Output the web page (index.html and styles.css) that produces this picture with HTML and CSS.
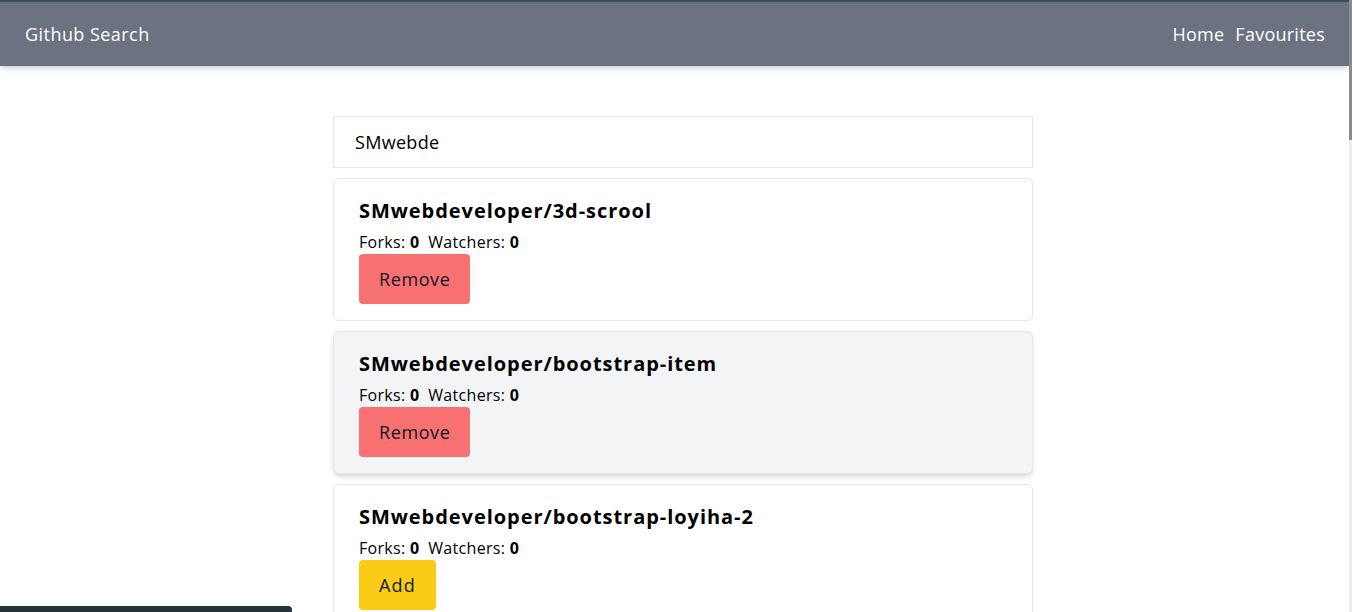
FILE: index.html
```html
<!DOCTYPE html>
<html lang="en">
<head>
<meta charset="utf-8">
<title>Github Search</title>
<link rel="stylesheet" href="styles.css">
</head>
<body>
<header class="navbar">
  <a class="brand" href="#">Github Search</a>
  <nav class="nav-links">
    <a href="#">Home</a>
    <a href="#">Favourites</a>
  </nav>
</header>
<main class="main">
  <div class="content">
    <input class="search" type="text" value="SMwebde">
    <div class="card">
      <h2 class="repo-title">SMwebdeveloper/3d-scrool</h2>
      <p class="repo-meta">Forks: <b>0</b>&nbsp; Watchers: <b>0</b></p>
      <button class="btn btn-remove">Remove</button>
    </div>
    <div class="card card-hover">
      <h2 class="repo-title">SMwebdeveloper/bootstrap-item</h2>
      <p class="repo-meta">Forks: <b>0</b>&nbsp; Watchers: <b>0</b></p>
      <button class="btn btn-remove">Remove</button>
    </div>
    <div class="card">
      <h2 class="repo-title">SMwebdeveloper/bootstrap-loyiha-2</h2>
      <p class="repo-meta">Forks: <b>0</b>&nbsp; Watchers: <b>0</b></p>
      <button class="btn btn-add">Add</button>
    </div>
  </div>
</main>
<div class="status-bar"></div>
<div class="scrollbar"><div class="scroll-thumb"></div></div>
</body>
</html>
```
FILE: styles.css
```css
* { box-sizing: border-box; }
html, body { margin: 0; padding: 0; }
body {
  font-family: "Open Sans", "Noto Sans", sans-serif;
  color: #000;
  background: #fff;
  overflow: hidden;
}
.navbar {
  display: flex;
  justify-content: space-between;
  align-items: center;
  height: 66px;
  padding: 0 25px 0 25px;
  margin-right: 2px;
  background: #6b7280;
  border-top: 2px solid #3e4c56;
  box-shadow: 0 4px 6px -1px rgba(0,0,0,0.12), 0 2px 4px -2px rgba(0,0,0,0.1);
}
.brand, .nav-links a {
  color: #fff;
  text-decoration: none;
  font-size: 18px;
  line-height: 28px;
  letter-spacing: 0.45px;
}
.nav-links { display: flex; gap: 11px; }
.nav-links a { letter-spacing: 0.25px; }
.main {
  display: flex;
  justify-content: center;
  padding-left: 14px;
  padding-top: 50px;
}
.content {
  width: 700px;
  display: flex;
  flex-direction: column;
  gap: 10px;
}
.search {
  width: 100%;
  height: 52px;
  border: 1px solid #e5e7eb;
  padding: 0 21px;
  font-family: inherit;
  font-size: 18px;
  letter-spacing: 0.3px;
  color: #000;
  outline: none;
}
.card {
  border: 1px solid #e5e7eb;
  border-radius: 6px;
  padding: 18px 25px 16px;
  background: #fff;
}
.card-hover {
  background: #f3f4f6;
  box-shadow: 0 4px 6px -1px rgba(0,0,0,0.12), 0 2px 4px -2px rgba(0,0,0,0.1);
}
.repo-title {
  margin: 0 0 5px;
  font-size: 20px;
  line-height: 28px;
  font-weight: 700;
  letter-spacing: 0.95px;
}
.repo-meta {
  margin: 0;
  font-size: 16px;
  line-height: 24px;
  letter-spacing: 0.3px;
}
.btn {
  display: block;
  border: none;
  border-radius: 4px;
  font-family: inherit;
  font-size: 18px;
  line-height: 28px;
  padding: 11px 20px;
  letter-spacing: 0.6px;
  color: #111827;
}
.btn-remove { background: #f87171; }
.btn-add { background: #facc15; letter-spacing: 1.2px; }
.status-bar {
  position: fixed;
  left: 0;
  bottom: 0;
  width: 292px;
  height: 6px;
  background: #263238;
  border-top-right-radius: 4px;
}
.scrollbar {
  position: fixed;
  top: 0;
  right: 0;
  width: 3px;
  height: 100%;
  background: #ececec;
}
.scroll-thumb {
  height: 140px;
  background: #8a8a8a;
}
```
